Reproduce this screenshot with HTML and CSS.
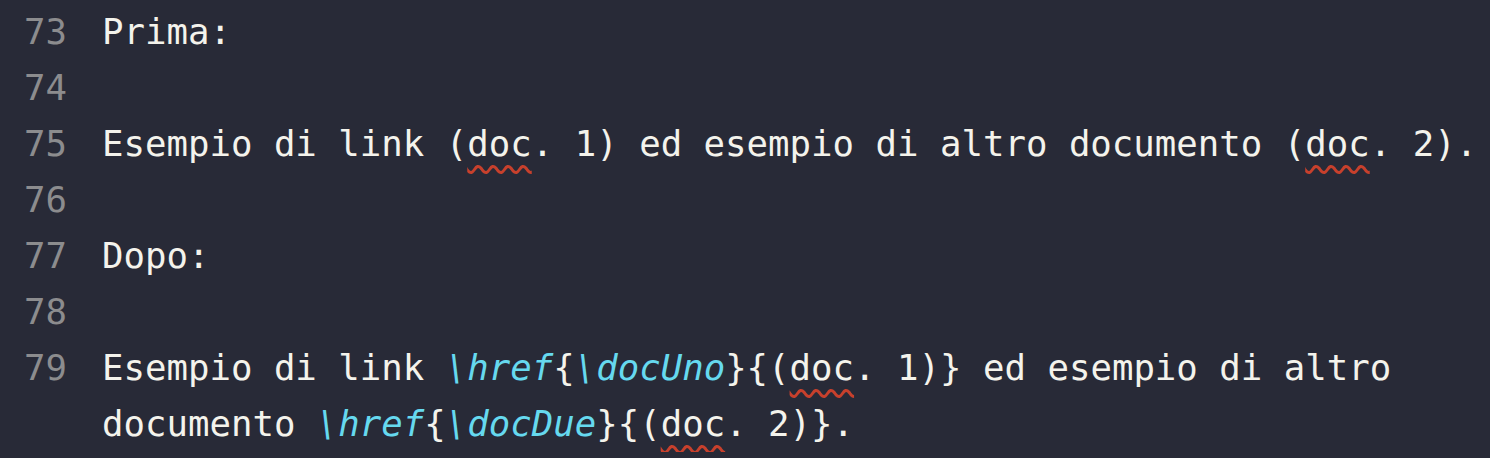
FILE: index.html
```html
<!DOCTYPE html>
<html lang="it">
<head>
<meta charset="utf-8">
<title>Editor</title>
<link rel="stylesheet" href="styles.css">
</head>
<body>
<div class="editor">
  <div class="line"><span class="num">73</span><span class="text">Prima:</span></div>
  <div class="line"><span class="num">74</span><span class="text"></span></div>
  <div class="line"><span class="num">75</span><span class="text">Esempio di link (<span class="spell">doc</span>. 1) ed esempio di altro documento (<span class="spell">doc</span>. 2).</span></div>
  <div class="line"><span class="num">76</span><span class="text"></span></div>
  <div class="line"><span class="num">77</span><span class="text">Dopo:</span></div>
  <div class="line"><span class="num">78</span><span class="text"></span></div>
  <div class="line"><span class="num">79</span><span class="text">Esempio di link <span class="cmd">\href</span>{<span class="cmd">\docUno</span>}{(<span class="spell">doc</span>. 1)} ed esempio di altro documento <span class="cmd">\href</span>{<span class="cmd">\docDue</span>}{(<span class="spell">doc</span>. 2)}.</span></div>
</div>
</body>
</html>
```

FILE: styles.css
```css
html, body {
  margin: 0;
  padding: 0;
  background: #282a37;
}

.editor {
  padding-top: 4px;
  font-family: "DejaVu Sans Mono", "Liberation Mono", monospace;
  font-size: 35.7px;
  line-height: 56px;
  color: #f4f3ec;
}

.line {
  display: grid;
  grid-template-columns: 67px 1fr;
  column-gap: 35px;
}

.num {
  text-align: right;
  color: #8c8c8e;
}

.text {
  white-space: pre-wrap;
  min-height: 56px;
}

.cmd {
  color: #66d9ef;
  font-style: italic;
}

.spell {
  text-decoration: underline wavy #c8402c;
  text-decoration-thickness: 2.5px;
  text-underline-offset: 9px;
}
```
